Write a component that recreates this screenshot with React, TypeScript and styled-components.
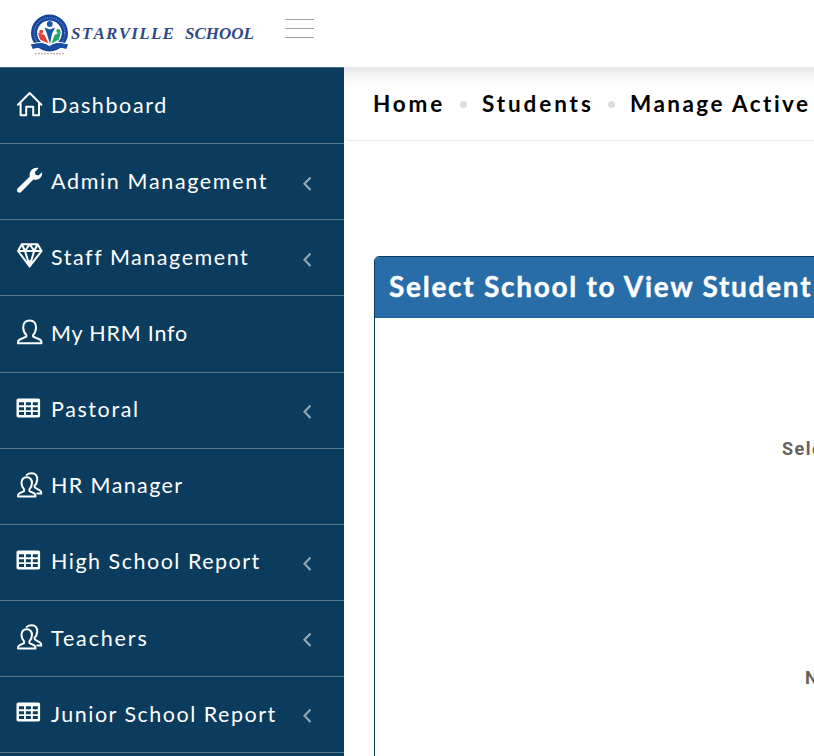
import React from "react";
import styled, { createGlobalStyle } from "styled-components";

const Global = createGlobalStyle`
  * { box-sizing: border-box; }
  body { margin: 0; background: #fff; overflow: hidden; font-family: Lato, sans-serif; }
`;

const Page = styled.div`
  width: 100vw;
  height: 100vh;
  overflow: hidden;
  display: flex;
  flex-direction: column;
  background: #fff;
`;

const Header = styled.header`
  height: 67px;
  flex: none;
  margin-right: -40px;
  display: flex;
  align-items: flex-start;
  background: #fff;
  position: relative;
  z-index: 1;
  box-shadow: 0 0 22px rgba(0, 0, 0, 0.2);
`;

const Brand = styled.div`
  display: flex;
  width: 285px;
  padding: 13px 0 0 29px;
`;

const BrandName = styled.div`
  display: flex;
  gap: 11px;
  margin-top: 9px;
  margin-left: 1px;
  font: italic bold 15px/24px "Liberation Serif", serif;
  color: #2e4a86;
`;

const BrandWord = styled.span<{ $width: number }>`
  width: ${(p) => p.$width}px;
  flex: none;
  display: flex;
  justify-content: space-between;
  font-size: 17px;
`;

const Burger = styled.button`
  width: 29px;
  height: 20px;
  margin-top: 19px;
  padding: 0;
  border: 0;
  background: none;
  display: flex;
  flex-direction: column;
  gap: 8px;
`;

const BurgerLine = styled.span`
  height: 1px;
  width: 29px;
  background: #a3a3a3;
`;

const Body = styled.div`
  flex: 1;
  min-height: 0;
  display: flex;
`;

const Sidebar = styled.nav`
  width: 344px;
  flex: none;
  position: relative;
  z-index: 2;
  padding-top: 1px;
  background: #0c3c5d;
  box-shadow: inset 0 1px 0 #456a83;
  overflow: hidden;
`;

const Item = styled.a`
  display: flex;
  height: 76.125px;
  padding: 0 31px 0 16px;
  border-bottom: 1px solid #55748b;
  color: #fff;
`;

const IconBox = styled.span`
  width: 35px;
  flex: none;
  padding-top: 23px;
  svg { display: block; }
`;

const Label = styled.span<{ $spacing: number }>`
  flex: 1;
  padding-top: 22.7px;
  font-size: 21.5px;
  line-height: 29px;
  letter-spacing: ${(p) => p.$spacing}px;
  white-space: nowrap;
`;

const Arrow = styled.svg`
  margin-top: 31.4px;
  flex: none;
`;

const Content = styled.main`
  flex: 1;
  min-width: 0;
`;

const Breadcrumb = styled.div`
  height: 74px;
  padding: 22px 0 0 29px;
  display: flex;
  border-bottom: 1px solid #e6eaee;
  border-bottom-left-radius: 5px;
  white-space: nowrap;
`;

const Crumb = styled.span<{ $width: number; $spacing: number }>`
  width: ${(p) => p.$width}px;
  flex: none;
  font-size: 22.5px;
  line-height: 30px;
  font-weight: 700;
  letter-spacing: ${(p) => p.$spacing}px;
  color: #000;
`;

const Dot = styled.span`
  width: 7px;
  height: 7px;
  margin: 12px 15px 0 0;
  flex: none;
  border-radius: 50%;
  background: #ddd;
`;

const Panel = styled.section`
  margin: 115px 0 0 30px;
  width: 900px;
  height: 520px;
  border: 1px solid #0c3c5d;
  border-radius: 5px;
  overflow: hidden;
`;

const PanelTitle = styled.h1`
  margin: 0;
  height: 61px;
  padding: 10px 14px;
  background: #286da8;
  border-bottom: 1px solid #2563a0;
  color: #fff;
  font-size: 28px;
  line-height: 38px;
  font-weight: 700;
  letter-spacing: 1.72px;
  -webkit-text-stroke: 0.4px #fff;
  white-space: nowrap;
`;

const FormRow = styled.div<{ $top: number; $left: number }>`
  padding: ${(p) => p.$top}px 0 0 ${(p) => p.$left}px;
  font: bold 18px/24px Roboto, sans-serif;
  letter-spacing: 1.5px;
  color: #66615b;
  white-space: nowrap;
`;

type IconName = "home" | "wrench" | "gem" | "user" | "table" | "users";

const Icon = ({ name }: { name: IconName }) => {
  const stroke = { fill: "none", stroke: "#fff", strokeWidth: 2, strokeLinejoin: "round", strokeLinecap: "round" } as const;
  return (
    <svg width="27" height="27" viewBox="0 0 27 27">
      {name === "home" && (
        <path {...stroke} d="M2 13.8 13.7 2 25.4 13.8M4.6 12v12.3h5.6v-8.6h7v8.6h5.8V12" />
      )}
      {name === "wrench" && (
        <path fill="#fff" d="M22.7 1 18.900 5.100l.6 2.700 2.900.7 3.700-3.300c.5 4.400-2.700 8-6.700 7.600l-2-.4L5.400 24.800c-1.200 1.100-2.700 1.100-3.700.2s-1-2.500.1-3.700L13.800 9.600C12.500 4.500 17.300-.3 22.700 1Z" />
      )}
      {name === "gem" && (
        <>
          <path {...stroke} d="M5.8 1.2h15.800l4 6.800-12 15.300L2 8ZM2 8h23.600M5.800 1.200 9 8l4.600 15L18.200 8l3.400-6.800M9 8l4.700-6.800L18.200 8" />
          <path fill="#fff" d="m9.700 18.500 3.900 6.300 3.900-6.300-3.900-1.500Z" />
        </>
      )}
      {name === "user" && (
        <path {...stroke} d="M13.6 1.500c4.300 0 6.600 2.800 6.400 7.200-.1 3.500-1.200 5.600-3 7.400l.2 1.600 6.500 2.800c1.400.7 1.900 2.100 1.800 3.800H2c-.2-1.800.5-3.200 1.900-3.800l6.400-2.800.1-1.600C8.500 14.300 7.300 12.200 7.200 8.700 7.100 4.300 9.300 1.500 13.600 1.500Z" />
      )}
      {name === "users" && (
        <>
          <path {...stroke} d="M10.6 5.300c3.700 0 5.600 2.500 5.300 6.100-.2 2.900-1 4.500-2.500 6l.1 1.700 4.700 2.300c1 .5 1.400 1.400 1.300 3H2c-.1-1.600.3-2.500 1.300-3L8 19.100l.1-1.700c-1.500-1.500-2.400-3.100-2.600-6-.2-3.600 1.600-6.100 5.100-6.100Z" />
          <path {...stroke} d="M10.600 2.900c1.200-1.100 3-1.600 5.200-1.600 3.800 0 5.700 2.700 5.400 6.300-.2 2.900-1.100 4.800-2.600 6.200l.2 1.700 5 2.800c1.300.7 1.700 1.800 1.500 3.200h-4" />
        </>
      )}
      {name === "table" && (
        <path
          fill="#fff"
          fillRule="evenodd"
          d="M2.200 2.500h20.200q1.700 0 1.700 1.700v15.600q0 1.700-1.700 1.700H2.200Q.5 21.500.5 19.800V4.200q0-1.700 1.700-1.700ZM3 6.300v3h5v-3Zm6.900 0v3h5v-3Zm6.900 0v3h5v-3ZM3 11.200v3h5v-3Zm6.900 0v3h5v-3Zm6.900 0v3h5v-3ZM3 16.100v3h5v-3Zm6.900 0v3h5v-3Zm6.900 0v3h5v-3Z"
        />
      )}
    </svg>
  );
};

const Crest = () => (
  <svg width="41" height="44" viewBox="0 0 41 44">
    <circle cx="20.500" cy="20" r="18.500" fill="#16459b" />
    <circle cx="20.500" cy="20" r="15.300" fill="none" stroke="#809fd2" strokeWidth="1.200" strokeDasharray="1 1.300" />
    <circle cx="20.500" cy="20" r="12.400" fill="#fff" />
    <path fill="#174da2" d="M1.800 31.500q11-4.500 18.700 1.300 7.700-5.800 18.700-1.300l-2 4.400q-9-2.700-14.400 1.200-2.300 1.200-4.600 0-5.400-3.900-14.400-1.200Z" />
    <path stroke="#fff" fill="none" strokeWidth="1" d="M4 30.700q10-3.400 16.500 2 6.500-5.400 16.500-2" />
    <circle cx="20.800" cy="11" r="2.900" fill="#1557b5" />
    <circle cx="12.200" cy="18.800" r="2" fill="#e63c35" />
    <circle cx="29.300" cy="18" r="2" fill="#27a669" />
    <path fill="#1455aa" d="m15.500 14.500 5.300 2 5.300-2-3 6L21 31l-3-10Z" />
    <path fill="#e63c35" d="m9 19.500 6.500 2.500 4 8.500-8.500-4Z" />
    <path fill="#27a669" d="m32 18.500-6.500 3.500-3 8.500 7.500-4Z" />
    <path stroke="#b59a9e" strokeWidth="1" strokeDasharray="2 1" d="M6 40.700h29" />
  </svg>
);

const menu: { label: string; icon: IconName; spacing: number; arrow?: boolean }[] = [
  { label: "Dashboard", icon: "home", spacing: 1.6 },
  { label: "Admin Management", icon: "wrench", spacing: 1.65, arrow: true },
  { label: "Staff Management", icon: "gem", spacing: 1.55, arrow: true },
  { label: "My HRM Info", icon: "user", spacing: 0.8 },
  { label: "Pastoral", icon: "table", spacing: 1.6, arrow: true },
  { label: "HR Manager", icon: "users", spacing: 1.4 },
  { label: "High School Report", icon: "table", spacing: 1.5, arrow: true },
  { label: "Teachers", icon: "users", spacing: 1.85, arrow: true },
  { label: "Junior School Report", icon: "table", spacing: 1.5, arrow: true },
];

const Word = ({ text, width }: { text: string; width: number }) => (
  <BrandWord $width={width}>
    {text.split("").map((c, i) => (
      <span key={i}>{c}</span>
    ))}
  </BrandWord>
);

export default function App() {
  return (
    <Page>
      <Global />
      <Header>
        <Brand>
          <Crest />
          <BrandName>
            <Word text="STARVILLE" width={103} />
            <Word text="SCHOOL" width={69} />
          </BrandName>
        </Brand>
        <Burger aria-label="Toggle menu">
          <BurgerLine />
          <BurgerLine />
          <BurgerLine />
        </Burger>
      </Header>
      <Body>
        <Sidebar>
          {menu.map((m) => (
            <Item key={m.label}>
              <IconBox>
                <Icon name={m.icon} />
              </IconBox>
              <Label $spacing={m.spacing}>{m.label}</Label>
              {m.arrow && (
                <Arrow width="11" height="15" viewBox="0 0 11 15">
                  <path d="M8.500 1.500 2.500 7.700l6 6.200" fill="none" stroke="#91a5b2" strokeWidth="2.200" />
                </Arrow>
              )}
            </Item>
          ))}
        </Sidebar>
        <Content>
          <Breadcrumb>
            <Crumb $width={87} $spacing={2.8}>Home</Crumb>
            <Dot />
            <Crumb $width={126} $spacing={2.9}>Students</Crumb>
            <Dot />
            <Crumb $width={190} $spacing={2.45}>Manage Active</Crumb>
          </Breadcrumb>
          <Panel>
            <PanelTitle>Select School to View Student</PanelTitle>
            <FormRow $top={119} $left={407}>Sele</FormRow>
            <FormRow $top={205} $left={430}>N</FormRow>
          </Panel>
        </Content>
      </Body>
    </Page>
  );
}
